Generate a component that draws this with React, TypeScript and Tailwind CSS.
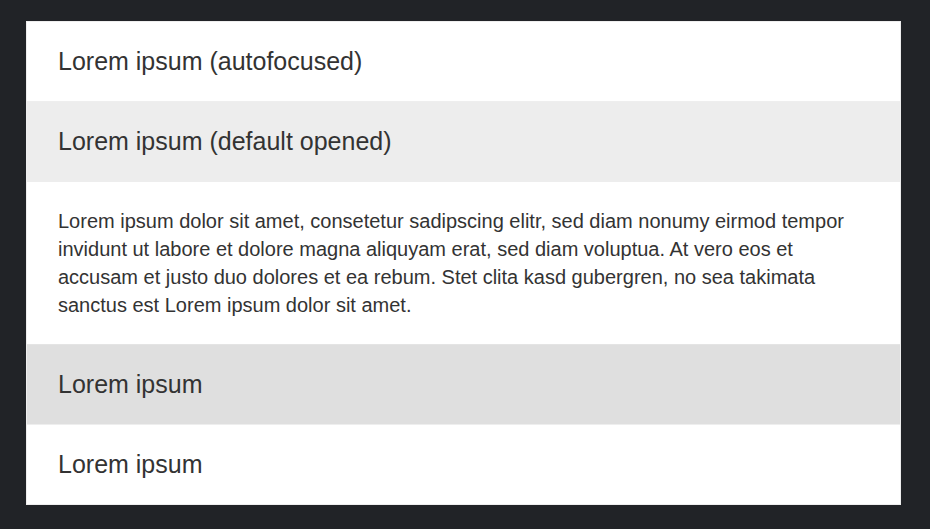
export default function App() {
  const font = { fontFamily: '"Liberation Sans", Arial, sans-serif' }
  return (
    <div className="min-h-[529px] bg-[#212327] pt-[21px] pb-6 px-[26px]" style={font}>
      <div className="w-[875px] bg-white border border-[#eeeeee] text-[#333333]">
        <button className="flex h-[80px] w-full items-center pl-[31px] pr-8 text-left text-[25px] border-b border-[#eeeeee]">
          Lorem ipsum (autofocused)
        </button>
        <button className="flex h-[80px] w-full items-center pl-[31px] pr-8 text-left text-[25px] bg-[#ededed]">
          Lorem ipsum (default opened)
        </button>
        <div className="pl-[31px] pr-8 py-[25px] text-[20px] leading-7 border-b border-[#e4e4e4]">
          Lorem ipsum dolor sit amet, consetetur sadipscing elitr, sed diam nonumy eirmod tempor
          invidunt ut labore et dolore magna aliquyam erat, sed diam voluptua. At vero eos et
          accusam et justo duo dolores et ea rebum. Stet clita kasd gubergren, no sea takimata
          sanctus est Lorem ipsum dolor sit amet.
        </div>
        <button className="flex h-[80px] w-full items-center pl-[31px] pr-8 text-left text-[25px] bg-[#dfdfdf] border-b border-[#eeeeee]">
          Lorem ipsum
        </button>
        <button className="flex h-[79px] w-full items-center pl-[31px] pr-8 text-left text-[25px]">
          Lorem ipsum
        </button>
      </div>
    </div>
  )
}
